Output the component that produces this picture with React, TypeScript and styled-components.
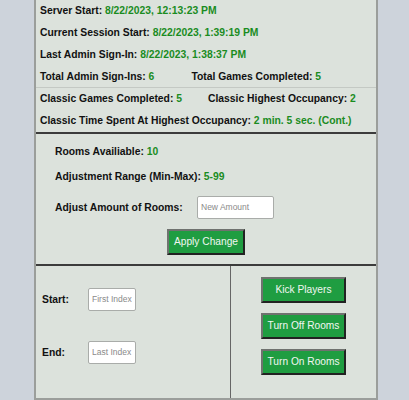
import React, { useState } from "react";
import styled, { createGlobalStyle } from "styled-components";

const palette = {
  page: "#cdd3db",
  panel: "#dce2dc",
  edge: "#9b9e9b",
  rule: "#c4c9c4",
  dark: "#3c3c3c",
  green: "#1a8c1f",
  button: "#1f9d41",
};

const GlobalStyle = createGlobalStyle`
  body {
    margin: 0;
    background-color: ${palette.page};
    font-family: "Liberation Sans", Arial, sans-serif;
    font-size: 10.35px;
    color: #111;
  }
`;

const Panel = styled.div`
  box-sizing: border-box;
  width: 344px;
  margin-left: 34px;
  background-color: ${palette.panel};
  border: 2px solid ${palette.edge};
  border-top: none;
`;

const StatsSection = styled.div`
  padding: 0 2px 0 4px;
  border-bottom: 2px solid ${palette.dark};
`;

const StatsGroup = styled.div<{ divided?: boolean }>`
  border-top: ${(props) => (props.divided ? `1px solid ${palette.rule}` : "none")};
  margin: 0 -2px 0 -4px;
  padding: 0 2px 0 4px;
`;

const StatRow = styled.div<{ gap?: number }>`
  display: flex;
  align-items: center;
  height: 21.75px;
  gap: ${(props) => (props.gap ?? 0) + "px"};
  font-weight: bold;
  white-space: nowrap;
`;

const Value = styled.span`
  color: ${palette.green};
`;

const RoomsSection = styled.div`
  display: flex;
  flex-direction: column;
  padding: 12px 0 9px;
  border-bottom: 2px solid ${palette.dark};
`;

const InfoLine = styled.div<{ space: number }>`
  display: flex;
  align-items: center;
  min-height: 12px;
  padding-left: 19px;
  margin-bottom: ${(props) => props.space + "px"};
  font-weight: bold;
`;

const Label = styled.span<{ width?: number }>`
  font-weight: bold;
  width: ${(props) => (props.width ? props.width + "px" : "auto")};
  flex-shrink: 0;
`;

const TextBox = styled.input<{ width: number }>`
  box-sizing: border-box;
  width: ${(props) => props.width + "px"};
  height: 23px;
  padding: 0 3px;
  border: 1px solid #a9aca9;
  border-radius: 2px;
  background: #fff;
  font-family: "Liberation Sans", Arial, sans-serif;
  font-size: 8.5px;
  outline: none;
  &::placeholder {
    color: #8a8a8a;
  }
`;

const ButtonRow = styled.div`
  display: flex;
  justify-content: center;
`;

const ActionButton = styled.button<{ width?: number }>`
  box-sizing: border-box;
  width: ${(props) => (props.width ? props.width + "px" : "auto")};
  height: 26px;
  padding: 0 4.5px;
  background-color: ${palette.button};
  color: #f2f6f2;
  font-family: "Liberation Sans", Arial, sans-serif;
  font-size: 10.2px;
  white-space: nowrap;
  border: 2px solid;
  border-color: #6f726f #222 #222 #6f726f;
  cursor: pointer;
`;

const ControlSection = styled.div`
  display: grid;
  grid-template-columns: 195px 1fr;
  height: 132px;
`;

const IndexColumn = styled.div`
  display: flex;
  flex-direction: column;
  gap: 30px;
  padding: 22px 0 0 6px;
  border-right: 1px solid #666;
`;

const IndexRow = styled.div`
  display: flex;
  align-items: center;
`;

const ButtonColumn = styled.div`
  display: flex;
  flex-direction: column;
  align-items: center;
  gap: 10px;
  padding-top: 11px;
`;

const App = () => {
  const [amount, setAmount] = useState("");
  const [first, setFirst] = useState("");
  const [last, setLast] = useState("");

  return (
    <>
      <GlobalStyle />
      <Panel>
        <StatsSection>
          <StatsGroup>
            <StatRow>
              <span>
                Server Start: <Value>8/22/2023, 12:13:23 PM</Value>
              </span>
            </StatRow>
            <StatRow>
              <span>
                Current Session Start: <Value>8/22/2023, 1:39:19 PM</Value>
              </span>
            </StatRow>
            <StatRow>
              <span>
                Last Admin Sign-In: <Value>8/22/2023, 1:38:37 PM</Value>
              </span>
            </StatRow>
            <StatRow gap={37}>
              <span>
                Total Admin Sign-Ins: <Value>6</Value>
              </span>
              <span>
                Total Games Completed: <Value>5</Value>
              </span>
            </StatRow>
          </StatsGroup>
          <StatsGroup divided>
            <StatRow gap={26}>
              <span>
                Classic Games Completed: <Value>5</Value>
              </span>
              <span>
                Classic Highest Occupancy: <Value>2</Value>
              </span>
            </StatRow>
            <StatRow>
              <span>
                Classic Time Spent At Highest Occupancy:{" "}
                <Value>2 min. 5 sec. (Cont.)</Value>
              </span>
            </StatRow>
          </StatsGroup>
        </StatsSection>

        <RoomsSection>
          <InfoLine space={13}>
            <span>
              Rooms Availiable: <Value>10</Value>
            </span>
          </InfoLine>
          <InfoLine space={13}>
            <span>
              Adjustment Range (Min-Max): <Value>5-99</Value>
            </span>
          </InfoLine>
          <InfoLine space={10}>
            <Label width={142}>Adjust Amount of Rooms:</Label>
            <TextBox
              width={77}
              placeholder="New Amount"
              value={amount}
              onChange={(e) => setAmount(e.target.value)}
            />
          </InfoLine>
          <ButtonRow>
            <ActionButton>Apply Change</ActionButton>
          </ButtonRow>
        </RoomsSection>

        <ControlSection>
          <IndexColumn>
            <IndexRow>
              <Label width={46}>Start:</Label>
              <TextBox
                width={48}
                placeholder="First Index"
                value={first}
                onChange={(e) => setFirst(e.target.value)}
              />
            </IndexRow>
            <IndexRow>
              <Label width={46}>End:</Label>
              <TextBox
                width={48}
                placeholder="Last Index"
                value={last}
                onChange={(e) => setLast(e.target.value)}
              />
            </IndexRow>
          </IndexColumn>
          <ButtonColumn>
            <ActionButton width={85}>Kick Players</ActionButton>
            <ActionButton width={85}>Turn Off Rooms</ActionButton>
            <ActionButton width={85}>Turn On Rooms</ActionButton>
          </ButtonColumn>
        </ControlSection>
      </Panel>
    </>
  );
};

export default App;
